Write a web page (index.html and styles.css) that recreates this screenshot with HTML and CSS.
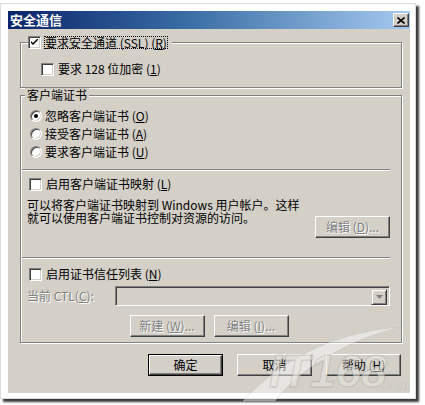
FILE: index.html
```html
<!DOCTYPE html>
<html lang="zh-CN">
<head>
<meta charset="utf-8">
<title>安全通信</title>
<link rel="stylesheet" href="styles.css">
</head>
<body>
<div class="frame">
  <div class="dialog">
    <div class="titlebar">
      <span class="title">安全通信</span>
      <span class="close-btn">
        <svg width="8" height="7" viewBox="0 0 8 7"><path d="M0.5 0.5 L7.5 6.5 M7.5 0.5 L0.5 6.5" stroke="#000" stroke-width="1.6" fill="none"/></svg>
      </span>
    </div>
    <div class="content">
      <fieldset class="group g1">
        <legend class="legend-check">
          <span class="cb checked"><svg width="7" height="7" viewBox="0 0 7 7"><path d="M0 2 L0 4 L2 6 L7 1 L7 -1 L2 4 Z" fill="#000"/></svg></span>
          <span class="focus">要求安全通道 (SSL) (<u>R</u>)</span>
        </legend>
        <div class="row sub">
          <span class="cb"></span>
          <span class="label">要求 128 位加密 (<u>1</u>)</span>
        </div>
      </fieldset>

      <fieldset class="group g2">
        <legend class="legend-text">客户端证书</legend>
        <div class="radio-row"><span class="rb on"></span><span class="label">忽略客户端证书 (<u>O</u>)</span></div>
        <div class="radio-row"><span class="rb"></span><span class="label">接受客户端证书 (<u>A</u>)</span></div>
        <div class="radio-row"><span class="rb"></span><span class="label">要求客户端证书 (<u>U</u>)</span></div>

        <div class="sep sep1"></div>
        <div class="row chk-row"><span class="cb"></span><span class="label">启用客户端证书映射 (<u>L</u>)</span></div>
        <div class="map-row">
          <p class="desc">可以将客户端证书映射到 Windows 用户帐户。这样<br>就可以使用客户端证书控制对资源的访问。</p>
          <span class="btn disabled map-btn">编辑 (<u>D</u>)...</span>
        </div>

        <div class="sep sep2"></div>
        <div class="row chk-row2"><span class="cb"></span><span class="label">启用证书信任列表 (<u>N</u>)</span></div>
        <div class="ctl-row">
          <span class="ctl-label disabled-text">当前 CTL(<u>C</u>):</span>
          <span class="combo">
            <span class="combo-btn"><svg width="7" height="4" viewBox="0 0 7 4"><path d="M0 0 H7 L3.5 4 Z" fill="#808080"/></svg></span>
          </span>
        </div>
        <div class="ctl-buttons">
          <span class="btn disabled">新建 (<u>W</u>)...</span>
          <span class="btn disabled">编辑 (<u>I</u>)...</span>
        </div>
      </fieldset>

      <div class="actions">
        <span class="btn default"><span class="btn-inner">确定</span></span>
        <span class="btn">取消</span>
        <span class="btn">帮助 (<u>H</u>)</span>
      </div>
    </div>
  </div>
  <svg class="watermark" width="190" height="95" viewBox="0 0 190 95" aria-hidden="true">
    <path d="M14 92 C 60 42, 118 22, 172 18 C 122 30, 74 56, 46 92 Z" fill="#ffffff" fill-opacity="0.45" stroke="#b0b0b0" stroke-opacity="0.4" stroke-width="0.8"/>
    <text x="40" y="78" font-family="Liberation Sans, sans-serif" font-size="46" font-weight="bold" font-style="italic" fill="#e8e6e0" fill-opacity="0.55" stroke="#8c8c8c" stroke-opacity="0.4" stroke-width="0.8">IT168</text>
    <text x="152" y="80" font-family="Liberation Sans, sans-serif" font-size="12" font-weight="bold" fill="#e8e6e0" fill-opacity="0.6" stroke="#909090" stroke-opacity="0.4" stroke-width="0.5">.com</text>
  </svg>
</div>
</body>
</html>
```

FILE: styles.css
```css
* { box-sizing: border-box; }

html, body {
  margin: 0;
  padding: 0;
  background: #ffffff;
}

body {
  width: 425px;
  height: 405px;
  overflow: hidden;
  font-family: "Noto Sans CJK SC", "Liberation Sans", sans-serif;
  font-size: 12px;
  line-height: 14px;
  color: #000;
}

.frame {
  position: relative;
  margin-top: 3px;
  width: 416px;
  height: 396px;
  padding: 7px 5px 4px 7px;
  border: 1px solid #dcdcdc;
  background: #fff;
  box-shadow: 3px 3px 2px #3a3a3a;
}

.dialog {
  width: 402px;
  height: 382px;
  background: #d4d0c8;
  display: flex;
  flex-direction: column;
}

.titlebar {
  height: 18px;
  display: flex;
  align-items: center;
  justify-content: space-between;
  padding: 0 1px 0 2px;
  background: linear-gradient(to right, #0a246a 0%, #3a6ea5 45%, #a6caf0 100%);
}

.title {
  color: #fff;
  font-weight: bold;
  font-size: 13px;
  line-height: 16px;
}

.close-btn {
  width: 16px;
  height: 14px;
  background: #d4d0c8;
  border: 1px solid;
  border-color: #fff #404040 #404040 #fff;
  box-shadow: inset -1px -1px 0 #808080;
  display: flex;
  align-items: center;
  justify-content: center;
}

.content {
  padding: 6px 8px 0 12px;
  display: flex;
  flex-direction: column;
}

fieldset.group {
  margin: 0;
  border: 1px solid #808080;
  box-shadow: 1px 1px 0 #fff, inset 1px 1px 0 #fff;
  min-width: 0;
}

.g1 {
  padding: 13px 11px 11px 7px;
}

.g2 {
  margin-top: 2px;
  padding: 5px 11px 5px 7px;
}

legend {
  background: #d4d0c8;
  line-height: 14px;
  height: 14px;
}

.legend-check {
  padding: 0 4px 0 0;
  display: flex;
  align-items: center;
}

.legend-text {
  padding: 0 2px;
  margin-left: -3px;
}

.focus {
  margin-left: 3px;
  padding: 0 1px;
  outline: 1px dotted #000;
  outline-offset: -1px;
  line-height: 13px;
  height: 13px;
}

.row {
  display: flex;
  align-items: center;
  height: 14px;
}

.sub {
  margin-left: 13px;
}

.label {
  margin-left: 4px;
  white-space: nowrap;
}

.cb {
  width: 13px;
  height: 13px;
  flex: none;
  background: #fff;
  border: 1px solid;
  border-color: #808080 #fff #fff #808080;
  box-shadow: inset 1px 1px 0 #404040, inset -1px -1px 0 #d4d0c8;
  display: flex;
  align-items: center;
  justify-content: center;
}

.cb svg { display: block; }

.radio-row {
  height: 18px;
  display: flex;
  align-items: center;
  margin-left: 2px;
}

.radio-row .label { margin-left: 3px; }

.rb {
  width: 12px;
  height: 12px;
  flex: none;
  border-radius: 50%;
  background: #fff;
  border: 1px solid;
  border-color: #808080 #fff #fff #808080;
  box-shadow: inset 1px 1px 0 #404040, inset -1px -1px 0 #d4d0c8;
  position: relative;
}

.rb.on::after {
  content: "";
  position: absolute;
  left: 3px;
  top: 3px;
  width: 4px;
  height: 4px;
  border-radius: 50%;
  background: #000;
}

.sep {
  height: 2px;
  border-top: 1px solid #808080;
  border-bottom: 1px solid #fff;
  margin-left: -6px;
}

.sep1 { margin-top: 8px; }

.chk-row {
  margin-top: 6px;
  margin-left: 1px;
}

.map-row {
  display: flex;
  justify-content: space-between;
  margin-top: 7px;
}

.desc {
  margin: 0 0 0 -1px;
  line-height: 13px;
  white-space: nowrap;
}

.map-btn {
  margin-top: 18px;
}

.sep2 { margin-top: 19px; }

.chk-row2 {
  margin-top: 8px;
  margin-left: 1px;
}

.ctl-row {
  margin-top: 5px;
  display: flex;
  align-items: center;
  justify-content: space-between;
  height: 20px;
}

.ctl-label {
  margin-left: -1px;
}

.disabled-text {
  color: #808080;
  text-shadow: 1px 1px 0 #fff;
}

.combo {
  width: 275px;
  height: 20px;
  background: #d4d0c8;
  border: 1px solid;
  border-color: #808080 #fff #fff #808080;
  box-shadow: inset 1px 1px 0 #404040, inset -1px -1px 0 #d4d0c8;
  display: flex;
  justify-content: flex-end;
  padding: 2px;
}

.combo-btn {
  width: 16px;
  height: 16px;
  border: 1px solid;
  border-color: #d4d0c8 #404040 #404040 #d4d0c8;
  box-shadow: inset 1px 1px 0 #fff, inset -1px -1px 0 #808080;
  display: flex;
  align-items: center;
  justify-content: center;
}

.ctl-buttons {
  margin-top: 9px;
  display: flex;
  justify-content: center;
  gap: 9px;
}

.btn {
  width: 75px;
  height: 22px;
  flex: none;
  display: flex;
  align-items: center;
  justify-content: center;
  background: #d4d0c8;
  border: 1px solid;
  border-color: #fff #404040 #404040 #fff;
  box-shadow: inset -1px -1px 0 #808080, inset 1px 1px 0 #d4d0c8;
  white-space: nowrap;
}

.btn.disabled {
  color: #808080;
  text-shadow: 1px 1px 0 #fff;
}

.btn.default {
  border: 1px solid #000;
  box-shadow: none;
  padding: 0;
}

.btn-inner {
  width: 100%;
  height: 100%;
  display: flex;
  align-items: center;
  justify-content: center;
  border: 1px solid;
  border-color: #fff #404040 #404040 #fff;
  box-shadow: inset -1px -1px 0 #808080;
}

.actions {
  margin-top: 11px;
  display: flex;
  justify-content: flex-end;
  gap: 14px;
  padding-right: 1px;
}

.watermark {
  position: absolute;
  left: 228px;
  top: 305px;
  pointer-events: none;
}
```
